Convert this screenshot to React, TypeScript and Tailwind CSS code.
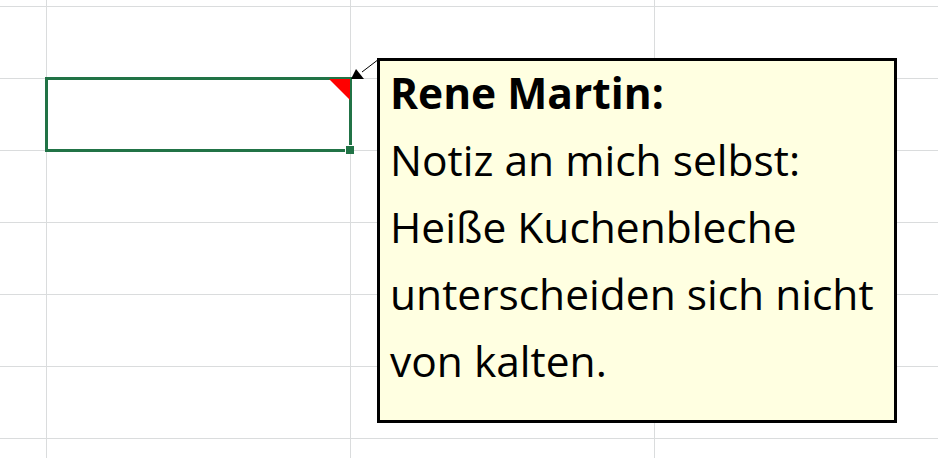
const colWidths = ["w-[47px]", "w-[304px]", "w-[304px]", "w-[304px]"];
const rowHeights = ["h-[7px]", "h-[72px]", "h-[72px]", "h-[72px]", "h-[72px]", "h-[72px]", "h-[72px]", "h-[20px]"];

function Cell({ w, h, selected }: { w: string; h: string; selected?: boolean }) {
  return (
    <div className={`${w} ${h} shrink-0 border-r border-b border-[#dadcdd] relative`}>
      {selected && (
        <>
          <div className="absolute -inset-[2px] border-[3px] border-[#217346] z-10" />
          {/* comment marker */}
          <svg className="absolute top-0 right-0 z-20" width="21" height="21" viewBox="0 0 21 21">
            <polygon points="0,0 21,0 21,21" fill="#ff0000" />
          </svg>
          {/* fill handle */}
          <div className="absolute -right-[4px] -bottom-[4px] w-[9px] h-[9px] bg-[#217346] border-l border-t border-white z-20" />
        </>
      )}
    </div>
  );
}

export default function App() {
  return (
    <div className="relative w-[938px] h-[458px] overflow-hidden bg-white">
      <div className="flex flex-col">
        {rowHeights.map((h, r) => (
          <div key={r} className="flex">
            {colWidths.map((w, c) => (
              <Cell key={c} w={w} h={h} selected={r === 2 && c === 1} />
            ))}
          </div>
        ))}
      </div>

      {/* arrow from comment to cell */}
      <svg className="absolute left-0 top-0 z-30 pointer-events-none" width="938" height="458">
        <line x1="362" y1="72" x2="379" y2="59" stroke="#000" strokeWidth="1" />
        <polygon points="351,79 356,69 364,79" fill="#000" />
      </svg>

      {/* comment box */}
      <div
        className="absolute left-[377px] top-[58px] w-[520px] h-[365px] border-[3px] border-black bg-[#ffffe1] z-30 pl-[10px] text-black text-[42.5px] leading-[67px] whitespace-nowrap"
        style={{ fontFamily: '"Open Sans", "Noto Sans", sans-serif' }}
      >
        <div className="-mt-[2px] font-bold">Rene Martin:</div>
        <div>Notiz an mich selbst:</div>
        <div>Heiße Kuchenbleche</div>
        <div>unterscheiden sich nicht</div>
        <div>von kalten.</div>
      </div>
    </div>
  );
}
